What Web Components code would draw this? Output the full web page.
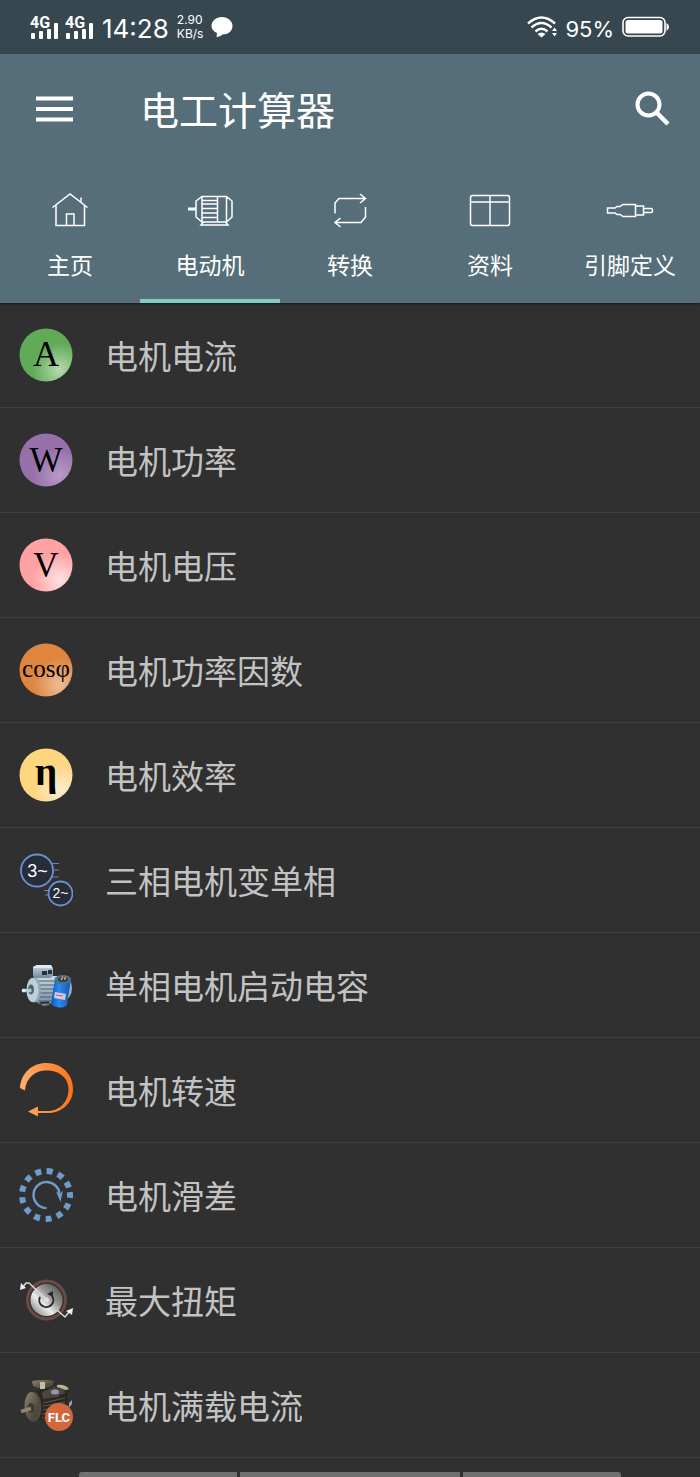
<!DOCTYPE html>
<html lang="zh-CN">
<head>
<meta charset="utf-8">
<meta name="viewport" content="width=device-width, initial-scale=1">
<title>电工计算器</title>
<style>
  body {
    margin: 0;
    background-color: #303030;
    font-family: "Roboto", "Noto Sans CJK SC", sans-serif;
    color: #fff;
  }
</style>
</head>
<body>
<calc-app>
  <status-bar slot="top"></status-bar>
  <app-bar slot="top">电工计算器</app-bar>
  <tab-bar slot="top">
    <tab-item icon="home">主页</tab-item>
    <tab-item icon="motor" active>电动机</tab-item>
    <tab-item icon="convert">转换</tab-item>
    <tab-item icon="table">资料</tab-item>
    <tab-item icon="plug">引脚定义</tab-item>
  </tab-bar>
  <menu-row icon="current">电机电流</menu-row>
  <menu-row icon="power">电机功率</menu-row>
  <menu-row icon="voltage">电机电压</menu-row>
  <menu-row icon="cosphi">电机功率因数</menu-row>
  <menu-row icon="efficiency">电机效率</menu-row>
  <menu-row icon="phases">三相电机变单相</menu-row>
  <menu-row icon="capacitor">单相电机启动电容</menu-row>
  <menu-row icon="speed">电机转速</menu-row>
  <menu-row icon="slip">电机滑差</menu-row>
  <menu-row icon="torque">最大扭矩</menu-row>
  <menu-row icon="flc">电机满载电流</menu-row>
  <gesture-bar slot="bottom"></gesture-bar>
</calc-app>

<script>
// Iconos de las pestañas, trazo fino, caja de 48x40
const tabIcons = {
  home: `<path d="M6.500 17.500 24 4l17.500 13.500M10 15v20.500h28.500V15M20.500 35.500V24H28v11.500M35 12.500V7.500"/>`,
  motor: `<path stroke-width="3" d="M2 19h8"/>
    <path d="M16 6.500h24.500L46 11v16l-5.500 5H16l-6-5V11zM16 6.500V32M31.500 6.500V32M40.500 6.500V32M16 10.500h15.500M16 14h15.500M16 18.500h15.500M16 23h15.500M16 27.500h15.500M17.500 32 15 35h27l-2.500-3"/>`,
  convert: `<path d="M9 23.500V13l4-4.500h26.500M34 4l5.500 4.500L34 13M39.500 17v10L35 32.500H9M14.500 28 9 32.500l5.500 4.500"/>`,
  table: `<rect x="4.500" y="5.500" width="39" height="30" rx="2"/><path d="M4.500 12h39M24 5.500v30"/>`,
  plug: `<path d="M1.500 18H9l2-1.500h3l3-2h12.500v12H17l-3-2h-3L9 23H1.500zM29.500 16h8v9h-8M37.500 18.500h7.500q1.500 0 1.500 2t-1.500 2h-7.500"/>`
};

// Disco de color con un símbolo encima
function disc(edge, glow, text, size, y, weight = 400) {
  return `<defs><radialGradient id="g" cx=".75" cy=".78" r=".5">
      <stop offset="0" stop-color="${glow}"/><stop offset="1" stop-color="${edge}"/>
    </radialGradient></defs>
    <circle cx="27" cy="27" r="26.500" fill="url(#g)"/>
    <text x="27" y="${y}" font-size="${size}" font-weight="${weight}" font-family="Liberation Serif, serif" fill="#000" text-anchor="middle">${text}</text>`;
}

// Iconos de la lista, caja de 54x54
const rowIcons = {
  current: disc('#61ab58', '#b8d9b1', 'A', 36, 38),
  power: disc('#9670a8', '#b89bc8', 'W', 35, 39),
  voltage: disc('#ffa2a3', '#ffe2e1', 'V', 35, 39),
  cosphi: disc('#de853f', '#ebbd98', 'cosφ', 25, 34),
  efficiency: disc('#ffd680', '#fbecce', 'η', 39, 37, 700),
  phases: `<g stroke="#6883a5" stroke-width="1"><path d="M33 10.500h7M34 17h6M33 24h7M25 37.500h6M26 42h5"/></g>
    <g fill="#262c38" stroke="#6d8fd2" stroke-width="1.800">
      <circle cx="18" cy="17.500" r="16"/><circle cx="41.500" cy="40.500" r="12"/>
    </g>
    <g fill="#fff" font-family="Liberation Sans, sans-serif" text-anchor="middle">
      <text x="18.500" y="24" font-size="18">3~</text><text x="41.500" y="45" font-size="14">2~</text>
    </g>`,
  capacitor: `<defs>
      <linearGradient id="m" x1="0" y1="0" x2="0" y2="1"><stop offset="0" stop-color="#c9dbe5"/><stop offset="1" stop-color="#71899a"/></linearGradient>
      <linearGradient id="b"><stop offset="0" stop-color="#0f59b5"/><stop offset=".4" stop-color="#2b8bf0"/><stop offset="1" stop-color="#1256ac"/></linearGradient>
    </defs>
    <ellipse cx="45" cy="30" rx="8" ry="12" fill="#9bb0bb"/>
    <path fill="url(#m)" d="M15 18h24v27l-18 1-6-3zM20 44l4 4 6-1v-4z"/>
    <path stroke="#4b6172" fill="none" d="M20 23h17M20 27h17M20 31h17M20 35h17M20 39h17M20 43h17"/>
    <path fill="url(#m)" d="M14 9l4-2 14 0 2 3v8l-3 2H16l-2-2z"/>
    <path fill="#e0eaf0" d="M14 9l4-2h14l1 3H15z"/>
    <path fill="#233341" d="M23 13h5v4h-5zM29 12h4v4h-4z"/>
    <ellipse cx="15" cy="32" rx="7" ry="12.500" fill="#8fa7b6"/><ellipse cx="13.500" cy="32" rx="6" ry="12" fill="#bdd0da"/>
    <ellipse cx="12" cy="31.500" rx="3" ry="5" fill="#4d6372"/>
    <path stroke="#b8c8d0" stroke-width="3.500" d="M3.500 32.500h9"/><circle cx="4.500" cy="32.500" r="1.800" fill="#e3edf0"/>
    <path fill="url(#b)" d="M36 20c3-4 14-2 16 1l-4 26c-3 4-13 3-16-1z"/>
    <ellipse cx="44" cy="21.500" rx="8" ry="4.500" fill="#517186"/>
    <ellipse cx="44" cy="21.500" rx="5" ry="2.500" fill="#243c4d"/><path stroke="#d6a283" stroke-width="1.500" d="M42 22l2-3M46 22v-3"/>
    <path fill="#d9c9dd" d="M36 34l11 2-1 6-11-2z"/><path stroke="#b8637d" d="M37 37l7 1"/>`,
  speed: `<defs><linearGradient id="o"><stop offset="0" stop-color="#ffae70"/><stop offset="1" stop-color="#fb7418"/></linearGradient></defs>
    <path fill="url(#o)" d="M1 25C2 10 13 0 27.500 0 43 0 54 11.500 54 26c0 14-11 24-25 24H19v3.500L9 48.500 19 43.500v4.500h10c11 0 20.500-8.500 20.500-22 0-11-9-18.500-22-18.500C16 7.500 7 15 6 27.500z"/>`,
  slip: `<g fill="none" stroke="#6e9bcb">
      <circle cx="27" cy="27" r="24" stroke-width="6" stroke-dasharray="6 5.600" transform="rotate(-7 27 27)"/>
      <path stroke-width="2.500" d="M27.500 40a13 13 0 1 1 13-14"/>
    </g>
    <path fill="#6e9bcb" d="M37 23.500l4 2.500 3-3.500L41.500 34z"/>`,
  torque: `<defs><linearGradient id="d" x1=".1" y1=".9" x2=".9" y2=".1">
      <stop offset="0" stop-color="#8c8c8c"/><stop offset=".35" stop-color="#ececec"/><stop offset=".65" stop-color="#939393"/><stop offset="1" stop-color="#5a5a5a"/>
    </linearGradient></defs>
    <circle cx="27.500" cy="27" r="19" fill="#3e302e" stroke="#684b45" stroke-width="3"/>
    <circle cx="27.500" cy="27" r="16" fill="url(#d)"/>
    <path fill="none" stroke="#292929" stroke-width="2" d="M21 24a7 7 0 1 0 12-1"/><path fill="#292929" d="M28 21l6-3v6z"/>
    <path fill="none" stroke="#d9d9d9" stroke-width="1.500" d="M27 26 10 10l-3 0-3 4M38 37l8 7 4-5"/>
    <circle cx="27.500" cy="27" r="2.500" fill="#e8dcd2"/>
    <path fill="#eee" d="M1 17l1-7 5 5zM54 35l-1 7-6-4z"/>`,
  flc: `<defs><linearGradient id="f" x1="0" y1="0" x2="1" y2="1"><stop offset="0" stop-color="#8d8472"/><stop offset="1" stop-color="#3a352d"/></linearGradient></defs>
    <path fill="#292724" d="M17 13l16-4 16 4-1 16-8 13H20z"/>
    <path stroke="#5e584d" fill="none" d="M24 25l22-5M24 28l22-4M24 32l20-4M23 36l12-2M23 40h8M23 17l23-2"/>
    <path fill="url(#f)" d="M13 3q11-2 22 0l-2 5-5 2h-9l-5-2z"/><path fill="#c6bda9" d="M21 4h5v7h-5z"/>
    <path fill="#4b463e" d="M23 14l12-5 12 3-8 7-15 2z"/>
    <ellipse cx="36" cy="14" rx="4" ry="2.500" fill="#929ba5"/><path fill="#bcb195" d="M38 7q8-1 12 4l-3 1-9-3z"/>
    <ellipse cx="14.500" cy="29" rx="8" ry="15" fill="#504a3f"/><ellipse cx="12.500" cy="28" rx="7" ry="14" fill="url(#f)"/>
    <ellipse cx="12" cy="30" rx="3.500" ry="5" fill="#3d382f"/><path stroke="#90866f" stroke-width="3.500" d="M2 33.500l10-3"/>
    <path fill="#9ea099" d="M50 25l3-3v4l-3 4z"/>
    <circle cx="40" cy="39" r="14" fill="#d4663c"/>
    <text x="40" y="44" font-size="13" font-weight="700" font-family="Liberation Sans Narrow, Roboto, sans-serif" fill="#fff" text-anchor="middle">FLC</text>`
};

// Contenedor general
class CalcApp extends HTMLElement {
  constructor() {
    super();
    this.attachShadow({ mode: 'open' });
    this.shadowRoot.innerHTML = `
      <style>
        :host {
          display: flex;
          flex-direction: column;
          min-height: 100vh;
        }
        header {
          position: relative;
          background-color: #566e79;
          box-shadow: 0 1px 2px rgba(0, 0, 0, 0.5);
        }
        main {
          flex: 1;
        }
      </style>
      <header><slot name="top"></slot></header>
      <main><slot></slot></main>
      <slot name="bottom"></slot>
    `;
  }
}

// Barra de estado del teléfono
class StatusBar extends HTMLElement {
  constructor() {
    super();
    this.attachShadow({ mode: 'open' });
    const signal = `
      <svg width="29" height="26" viewBox="0 0 29 26" fill="#fff">
        <text x="0" y="14" font-size="16" font-weight="700">4G</text>
        <rect x="1" y="19" width="4" height="6" rx="1"/><rect x="9" y="17" width="4" height="8" rx="1"/>
        <rect x="17" y="15" width="4" height="10" rx="1"/><rect x="24" y="9" width="4" height="16" rx="1"/>
      </svg>`;
    this.shadowRoot.innerHTML = `
      <style>
        :host {
          display: flex;
          align-items: center;
          justify-content: space-between;
          height: 54px;
          padding: 0 31px 0 30px;
          background-color: #37474f;
        }
        div {
          display: flex;
          align-items: center;
        }
        .left { gap: 6px; }
        .right { gap: 8px; }
        time, .level {
          padding-top: 3px;
          line-height: 32px;
          font-family: Inter, sans-serif;
        }
        time {
          margin-left: 2px;
          font-size: 26px;
        }
        .level { font-size: 22px; }
        .speed {
          display: flex;
          flex-direction: column;
          margin: 0 2px;
          font: 12px/14px Inter, sans-serif;
        }
      </style>
      <div class="left">
        ${signal}${signal}
        <time>14:28</time>
        <span class="speed"><span>2.90</span><span>KB/s</span></span>
        <svg width="22" height="20" viewBox="0 0 22 20" fill="#fff"><path d="M11 0c6 0 10.500 4 10.500 9S17 17.500 11.500 17.500C10 19 8 20 5.500 20l.500-4C2.500 14.500.500 12 .500 9 .500 4 5 0 11 0z"/></svg>
      </div>
      <div class="right">
        <svg width="30" height="22" viewBox="0 0 30 22" fill="none" stroke="#fff" stroke-width="2.400">
          <path d="M1 7.500q13.500-12 27 0M4.500 11.500q10-9 20 0M8.500 15.500q6-5.500 12 0"/>
          <path fill="#fff" stroke="none" d="M10.500 18q4-3 8 0l-4 3.500zM25 15l2.500-3.500L30 15zM25 17h5l-2.500 3.500z"/>
        </svg>
        <span class="level">95%</span>
        <svg width="47" height="22" viewBox="0 0 47 22">
          <rect x="1" y="1.500" width="42" height="18.500" rx="5" fill="none" stroke="#fff" stroke-width="1.600"/>
          <rect x="3.500" y="4" width="37" height="13.500" rx="2.500" fill="#fff"/><path fill="#fff" d="M44.500 7q2.500 1.500 2.500 4t-2.500 4z"/>
        </svg>
      </div>
    `;
  }
}

// Cabecera con menú, título y búsqueda
class AppBar extends HTMLElement {
  constructor() {
    super();
    this.attachShadow({ mode: 'open' });
    this.shadowRoot.innerHTML = `
      <style>
        :host {
          display: flex;
          align-items: center;
          height: 110px;
          padding: 0 26px;
        }
        button {
          display: flex;
          padding: 0 10px;
          border: 0;
          background: none;
          cursor: pointer;
        }
        button:last-child { padding: 0 4px; }
        h1 {
          flex: 1;
          margin: 0;
          padding: 6px 0 0 57px;
          font-size: 39px;
          line-height: 48px;
          font-weight: 400;
        }
      </style>
      <button aria-label="菜单">
        <svg width="37" height="26" viewBox="0 0 37 26" stroke="#fff" stroke-width="4"><path d="M0 2.500h37M0 13h37M0 23.500h37"/></svg>
      </button>
      <h1><slot></slot></h1>
      <button aria-label="搜索">
        <svg width="36" height="36" viewBox="0 0 36 36" fill="none" stroke="#fff" stroke-width="4"><circle cx="14.500" cy="13.500" r="11"/><path d="M22.500 21.500 34 33" stroke-width="4.500"/></svg>
      </button>
    `;
  }
}

class TabBar extends HTMLElement {
  constructor() {
    super();
    this.attachShadow({ mode: 'open' });
    this.shadowRoot.innerHTML = `
      <style>
        nav { display: flex; }
        ::slotted(*) { flex: 1; }
      </style>
      <nav><slot></slot></nav>
    `;
  }
}

class TabItem extends HTMLElement {
  constructor() {
    super();
    this.attachShadow({ mode: 'open' });
    this.shadowRoot.innerHTML = `
      <style>
        :host { display: block; }
        button {
          display: flex;
          flex-direction: column;
          align-items: center;
          gap: 21px;
          width: 100%;
          padding: 26px 0 16px;
          border: 0;
          border-bottom: 4px solid transparent;
          background: none;
          color: #fff;
          font-family: inherit;
          font-size: 23px;
          line-height: 32px;
          white-space: nowrap;
          cursor: pointer;
        }
        :host([active]) button { border-bottom-color: #80cbc4; }
      </style>
      <button>
        <svg width="48" height="40" viewBox="0 0 48 40" fill="none" stroke="#fff" stroke-width="1.500" aria-hidden="true">${tabIcons[this.getAttribute('icon')]}</svg>
        <slot></slot>
      </button>
    `;
  }
}

// Fila de la lista
class MenuRow extends HTMLElement {
  constructor() {
    super();
    this.attachShadow({ mode: 'open' });
    this.shadowRoot.innerHTML = `
      <style>
        :host {
          display: block;
          border-bottom: 1px solid #404040;
        }
        a {
          display: flex;
          align-items: center;
          gap: 32px;
          height: 104px;
          padding: 0 19px;
          color: #c3c3c3;
          font-size: 33px;
          line-height: 48px;
          text-decoration: none;
        }
        svg { flex: none; }
        span { padding-top: 6px; }
      </style>
      <a href="#${this.getAttribute('icon')}">
        <svg width="54" height="54" viewBox="0 0 54 54" aria-hidden="true">${rowIcons[this.getAttribute('icon')]}</svg>
        <span><slot></slot></span>
      </a>
    `;
  }
}

// Guías de gestos en el borde inferior
class GestureBar extends HTMLElement {
  constructor() {
    super();
    this.attachShadow({ mode: 'open' });
    this.shadowRoot.innerHTML = `
      <style>
        :host {
          display: flex;
          gap: 3px;
          height: 5px;
          padding: 0 79px;
        }
        i {
          flex: 158;
          background-color: #707070;
        }
        i:nth-of-type(2) { flex: 220; }
        i:first-of-type { border-top-left-radius: 3px; }
        i:last-of-type { border-top-right-radius: 3px; }
      </style>
      <i></i><i></i><i></i>
    `;
  }
}

customElements.define('calc-app', CalcApp);
customElements.define('status-bar', StatusBar);
customElements.define('app-bar', AppBar);
customElements.define('tab-bar', TabBar);
customElements.define('tab-item', TabItem);
customElements.define('menu-row', MenuRow);
customElements.define('gesture-bar', GestureBar);
</script>
</body>
</html>
